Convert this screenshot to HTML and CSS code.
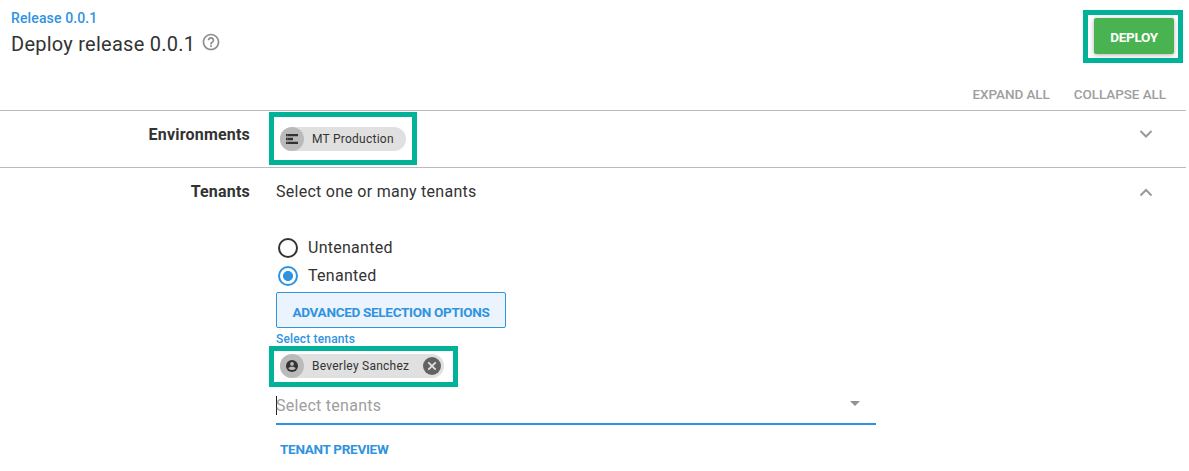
FILE: index.html
```html
<!DOCTYPE html>
<html lang="en">
<head>
<meta charset="utf-8">
<title>Deploy release 0.0.1</title>
<link rel="stylesheet" href="styles.css">
</head>
<body>
<main class="page">
  <header class="header">
    <div class="heading">
      <a class="breadcrumb">Release 0.0.1</a>
      <div class="title-row">
        <h1 class="title">Deploy release 0.0.1</h1>
        <svg class="help" viewBox="0 0 24 24"><path fill="#8c8c8c" d="M11 18h2v-2h-2v2zm1-16C6.480 2 2 6.480 2 12s4.480 10 10 10 10-4.480 10-10S17.520 2 12 2zm0 18c-4.410 0-8-3.590-8-8s3.590-8 8-8 8 3.590 8 8-3.590 8-8 8zm0-14c-2.210 0-4 1.790-4 4h2c0-1.100.9-2 2-2s2 .9 2 2c0 2-3 1.750-3 5h2c0-2.250 3-2.500 3-5 0-2.210-1.790-4-4-4z"/></svg>
      </div>
    </div>
    <div class="deploy-highlight"><button class="deploy">DEPLOY</button></div>
  </header>
  <nav class="toggles"><span class="expand">EXPAND ALL</span><span class="collapse">COLLAPSE ALL</span></nav>

  <section class="row environments">
    <h2 class="row-label label-env">Environments</h2>
    <div class="row-body">
      <div class="chip chip-env">
        <span class="avatar"><svg width="12" height="10" viewBox="0 0 12 10"><path fill="#333" d="M0 0h12v2.300H0zM0 3.800h7v2.400H0zM0 7.700h12V10H0z"/><path fill="#777" d="M1 .8h1v.8H1zM1 4.600h1v.8H1zM1 8.400h1v.8H1z"/></svg></span>
        <span class="chip-text">MT Production</span>
      </div>
    </div>
    <svg class="chevron" viewBox="0 0 14 10"><path d="M1.500 2 7 7.500 12.500 2" fill="none" stroke="#999" stroke-width="2"/></svg>
  </section>

  <section class="row tenants">
    <h2 class="row-label label-tenants">Tenants</h2>
    <div class="row-body">
      <p class="summary">Select one or many tenants</p>
      <div class="radios">
        <label class="radio"><span class="dot"></span><span class="radio-text">Untenanted</span></label>
        <label class="radio"><span class="dot checked"></span><span class="radio-text">Tenanted</span></label>
      </div>
      <button class="advanced">ADVANCED SELECTION OPTIONS</button>
      <div class="field-label">Select tenants</div>
      <div class="chip chip-tenant">
        <span class="avatar"><svg width="12" height="12" viewBox="0 0 12 12"><circle cx="6" cy="6" r="6" fill="#333"/><circle cx="6" cy="3.900" r="1.900" fill="#bababa"/><path d="M2.300 8.300C3 6.200 9 6.200 9.700 8.300 8.200 10.700 3.800 10.700 2.300 8.300z" fill="#bababa"/></svg></span>
        <span class="chip-text">Beverley Sanchez</span>
        <svg class="remove" viewBox="0 0 18 18"><circle cx="9" cy="9" r="9" fill="#626262"/><path d="m5.300 5.300 7.400 7.400m0-7.400-7.400 7.400" stroke="#e0e0e0" stroke-width="1.800"/></svg>
      </div>
      <div class="select">
        <span class="caret"></span><span class="placeholder">Select tenants</span>
        <svg class="arrow" viewBox="0 0 10 5"><path d="M0 0h10L5 5z" fill="#929292"/></svg>
      </div>
      <a class="preview">TENANT PREVIEW</a>
    </div>
    <svg class="chevron" viewBox="0 0 14 10"><path d="M1.500 7.500 7 2l5.500 5.500" fill="none" stroke="#999" stroke-width="2"/></svg>
  </section>
</main>
</body>
</html>
```

FILE: styles.css
```css
*, *::before { box-sizing: border-box; }
body { margin: 0; background: #fff; color: #333; font-family: Roboto, sans-serif; overflow: hidden; }
h1, h2, p { margin: 0; }
button { font-family: inherit; padding: 0; white-space: nowrap; }
.page { width: 1186px; height: 471px; }
.header { display: flex; justify-content: space-between; height: 82px; padding: 10px 3px 0 11px; }
.breadcrumb { display: block; color: #2f93e0; font-size: 14px; line-height: 16px; font-weight: 500; letter-spacing: .13px; }
.title-row { display: flex; align-items: center; gap: 6px; margin-top: 5px; }
.title { font-size: 20px; line-height: 26px; font-weight: 400; letter-spacing: .25px; }
.help { width: 20px; height: 20px; margin-top: -4px; }
.deploy-highlight { width: 100px; height: 53px; border: 5px solid #00b398; padding: 3px 0 0 6px; }
.deploy { display: block; width: 80px; height: 36px; padding-top: 2px; border: 0; border-radius: 2px; background: #48b350; color: #fff; font-size: 13.5px; font-weight: 700; letter-spacing: -.3px; box-shadow: 0 1px 5px rgba(0, 0, 0, .3); }
.toggles { display: flex; justify-content: flex-end; gap: 24px; height: 28px; padding-right: 20px; color: #9e9e9e; font-size: 13.5px; line-height: 25px; font-weight: 500; letter-spacing: -.07px; }
.row { display: flex; border-top: 1px solid #bbb; }
.row-label { width: 250px; text-align: right; font-size: 16px; line-height: 24px; font-weight: 700; padding-top: 12px; letter-spacing: .2px; }
.row-body { width: 600px; margin-left: 26px; }
.environments { height: 57px; }
.chevron { width: 14px; height: 10px; margin: 18px 33px 0 auto; }
.tenants .chevron { margin-top: 20px; }
.chip { position: relative; display: flex; align-items: center; height: 24px; margin-left: 4px; border-radius: 12px; background: #e0e0e0; font-size: 12px; letter-spacing: .25px; }
.chip::before { content: ""; position: absolute; left: -11px; border: 5px solid #00b398; }
.chip-env { width: 126px; margin-top: 16px; }
.chip-env::before { top: -15px; width: 148px; height: 53px; }
.chip-tenant { width: 164px; margin-top: 7px; }
.chip-tenant::before { top: -8px; width: 189px; height: 41px; }
.avatar { display: flex; align-items: center; justify-content: center; width: 24px; height: 24px; border-radius: 50%; background: #bababa; }
.chip-text { margin-left: 8px; white-space: nowrap; }
.remove { width: 18px; height: 18px; margin: 0 3px 0 auto; }
.summary { padding-top: 12px; font-size: 16px; line-height: 24px; letter-spacing: .27px; }
.radios { margin-top: 30px; }
.radio { display: flex; align-items: center; height: 28px; padding-left: 2px; gap: 10px; font-size: 16px; letter-spacing: .27px; }
.radio-text { padding-bottom: 2px; }
.dot { width: 20px; height: 20px; border: 2px solid #333; border-radius: 50%; }
.checked { border-color: #2f93e0; background: radial-gradient(circle, #2f93e0 4.600px, transparent 5.400px); }
.advanced { display: block; width: 230px; height: 36px; margin-top: 2px; padding-top: 4px; border: 1px solid #2f93e0; border-radius: 2px; background: #ebf4fc; color: #2f93e0; font-size: 13.5px; font-weight: 700; letter-spacing: -.29px; }
.field-label { height: 19px; color: #2f93e0; font-size: 12px; line-height: 22px; font-weight: 500; letter-spacing: .16px; }
.select { display: flex; align-items: center; height: 47px; border-bottom: 2px solid #2f93e0; padding-top: 9px; color: #9e9e9e; font-size: 16px; letter-spacing: .27px; }
.caret { width: 1px; height: 19px; background: #222; margin-right: -1px; }
.arrow { width: 10px; height: 5px; margin: -3px 16px 0 auto; }
.preview { display: block; margin: 16px 0 0 4px; color: #2f93e0; font-size: 13.5px; line-height: 17px; font-weight: 700; letter-spacing: -.29px; }
```
